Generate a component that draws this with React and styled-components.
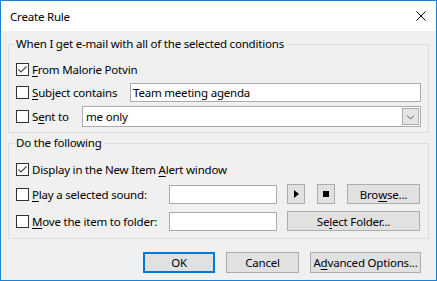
import React from 'react';
import styled, { createGlobalStyle } from 'styled-components';

const Global = createGlobalStyle`
  html, body { margin: 0; padding: 0; background: #fff; }
  body { font-family: "Noto Sans", "Open Sans", sans-serif; font-size: 11.5px; letter-spacing: -0.2px; color: #000; }
  * { box-sizing: border-box; }
`;

const Window = styled.div`
  width: 437px;
  height: 281px;
  border: 1px solid #1883d7;
  background: #f0f0f0;
  display: flex;
  flex-direction: column;
`;

const TitleBar = styled.div`
  height: 30px;
  flex-shrink: 0;
  background: #fff;
  display: flex;
  align-items: center;
  justify-content: space-between;
  padding: 0 10px 0 9px;
`;

const Title = styled.span`
  font-size: 11.5px;
`;

const CloseBtn = styled.span`
  display: flex;
  width: 10px;
  height: 10px;
`;

const Body = styled.div`
  display: flex;
  flex-direction: column;
  padding: 5px 7px 0 7px;
`;

const Group = styled.fieldset`
  margin: ${p => p.$mt || 0}px 0 0 0;
  border: 1px solid #dcdcdc;
  padding: ${p => p.$pt}px 7px ${p => p.$pb}px 7px;
  display: flex;
  flex-direction: column;
  gap: ${p => p.$gap || 4}px;
  min-width: 0;
`;

const Legend = styled.legend`
  line-height: 16px;
  padding: 0 2px;
  margin-left: -2px;
`;

const Row = styled.div`
  display: flex;
  align-items: center;
  height: ${p => p.$h}px;
  margin-top: ${p => p.$mt || 0}px;
`;

const CheckLabel = styled.label`
  display: flex;
  align-items: center;
  gap: 3px;
  width: ${p => (p.$w ? `${p.$w}px` : 'auto')};
  flex-shrink: 0;
  white-space: nowrap;
`;

const Box = styled.span`
  width: 13px;
  height: 13px;
  border: 1px solid #333;
  background: #fff;
  display: flex;
  flex-shrink: 0;
`;

const Key = styled.u`
  text-decoration-thickness: 1px;
  text-underline-offset: 2px;
`;

const TextBox = styled.div`
  height: 19px;
  width: ${p => (p.$w ? `${p.$w}px` : 'auto')};
  flex: ${p => (p.$w ? '0 0 auto' : '1')};
  border: 1px solid #ababab;
  background: #fff;
  padding: 0 2px;
  display: flex;
  align-items: center;
  white-space: nowrap;
`;

const Combo = styled.div`
  flex: 1;
  height: 21px;
  border: 1px solid #ababab;
  background: #fff;
  display: flex;
  align-items: center;
  justify-content: space-between;
  padding: 0 1px 0 3px;
`;

const DropBtn = styled.span`
  width: 17px;
  height: 17px;
  background: #e5e5e5;
  border: 1px solid #adadad;
  display: flex;
  align-items: center;
  justify-content: center;
`;

const Button = styled.div`
  width: ${p => p.$w}px;
  height: ${p => p.$h || 20}px;
  margin-left: ${p => p.$ml || 0}px;
  flex-shrink: 0;
  background: #e1e1e1;
  border: ${p => (p.$default ? '2px solid #0078d7' : '1px solid #adadad')};
  display: flex;
  align-items: center;
  justify-content: center;
  white-space: nowrap;
`;

const Footer = styled.div`
  display: flex;
  justify-content: flex-end;
  gap: 11px;
  margin-top: 13px;
  padding-right: 8px;
`;

const Check = ({ checked }) => (
  <Box>
    {checked && (
      <svg width="11" height="11" viewBox="0 0 11 11">
        <path d="M1.5 5.5 L4 8 L9.5 2.5" fill="none" stroke="#4a4a4a" strokeWidth="1.2" />
      </svg>
    )}
  </Box>
);

export default function App() {
  return (
    <>
      <Global />
      <Window>
        <TitleBar>
          <Title>Create Rule</Title>
          <CloseBtn>
            <svg width="10" height="10" viewBox="0 0 10 10">
              <path d="M0.5 0.5 L9.5 9.5 M9.5 0.5 L0.5 9.5" stroke="#000" strokeWidth="1" />
            </svg>
          </CloseBtn>
        </TitleBar>
        <Body>
          <Group $pt={8} $pb={5}>
            <Legend>When I get e-mail with all of the selected conditions</Legend>
            <Row $h={19}>
              <CheckLabel>
                <Check checked />
                <span><Key>F</Key>rom Malorie Potvin</span>
              </CheckLabel>
            </Row>
            <Row $h={19}>
              <CheckLabel $w={114}>
                <Check />
                <span><Key>S</Key>ubject contains</span>
              </CheckLabel>
              <TextBox>Team meeting agenda</TextBox>
            </Row>
            <Row $h={21}>
              <CheckLabel $w={66}>
                <Check />
                <span>S<Key>e</Key>nt to</span>
              </CheckLabel>
              <Combo>
                <span>me only</span>
                <DropBtn>
                  <svg width="9" height="6" viewBox="0 0 9 6">
                    <path d="M1 1.5 L4.5 5 L8 1.5" fill="none" stroke="#555" strokeWidth="1" />
                  </svg>
                </DropBtn>
              </Combo>
            </Row>
          </Group>
          <Group $mt={2} $pt={9} $pb={7} $gap={5}>
            <Legend>Do the following</Legend>
            <Row $h={19}>
              <CheckLabel>
                <Check checked />
                <span>Display in the New Item <Key>A</Key>lert window</span>
              </CheckLabel>
            </Row>
            <Row $h={20}>
              <CheckLabel $w={153}>
                <Check />
                <span><Key>P</Key>lay a selected sound:</span>
              </CheckLabel>
              <TextBox $w={108} />
              <Button $w={18} $ml={10}>
                <svg width="5" height="8" viewBox="0 0 5 8"><path d="M0 0 L5 4 L0 8 Z" fill="#000" /></svg>
              </Button>
              <Button $w={18} $ml={12}>
                <svg width="6" height="6" viewBox="0 0 6 6"><rect width="6" height="6" fill="#000" /></svg>
              </Button>
              <Button $w={73} $ml={12}>Bro<Key>w</Key>se...</Button>
            </Row>
            <Row $h={20} $mt={2}>
              <CheckLabel $w={153}>
                <Check />
                <span><Key>M</Key>ove the item to folder:</span>
              </CheckLabel>
              <TextBox $w={108} />
              <Button $w={133} $ml={10}>Se<Key>l</Key>ect Folder...</Button>
            </Row>
          </Group>
          <Footer>
            <Button $w={72} $h={21} $default>OK</Button>
            <Button $w={73} $h={21}>Cancel</Button>
            <Button $w={111} $h={21}>A<Key>d</Key>vanced Options...</Button>
          </Footer>
        </Body>
      </Window>
    </>
  );
}
